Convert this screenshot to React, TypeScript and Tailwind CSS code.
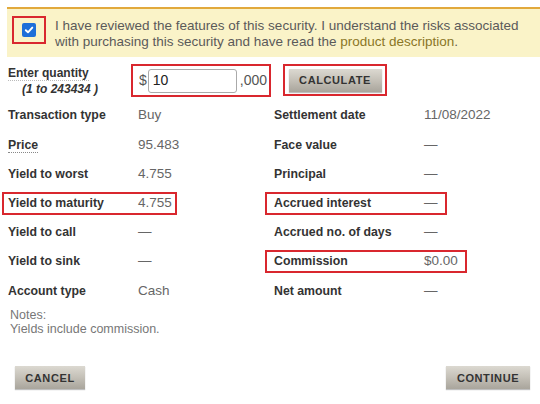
import React from "react";

const F = { fontFamily: '"Liberation Sans", Arial, sans-serif' };

type Cell = { label: string; value: string; box?: boolean; boxW?: number; dotted?: boolean };

const left: Cell[] = [
  { label: "Transaction type", value: "Buy" },
  { label: "Price", value: "95.483", dotted: true },
  { label: "Yield to worst", value: "4.755" },
  { label: "Yield to maturity", value: "4.755", box: true },
  { label: "Yield to call", value: "—" },
  { label: "Yield to sink", value: "—" },
  { label: "Account type", value: "Cash" },
];

const right: Cell[] = [
  { label: "Settlement date", value: "11/08/2022" },
  { label: "Face value", value: "—" },
  { label: "Principal", value: "—" },
  { label: "Accrued interest", value: "—", box: true, boxW: 182 },
  { label: "Accrued no. of days", value: "—" },
  { label: "Commission", value: "$0.00", box: true, boxW: 202 },
  { label: "Net amount", value: "—" },
];

function Btn({ children, className = "" }: { children: React.ReactNode; className?: string }) {
  return (
    <div
      className={
        "flex items-center justify-center h-[23px] bg-gradient-to-b from-[#dcd9d1] via-[#c4c0b7] to-[#a9a59c] text-[11px] font-bold tracking-[0.6px] text-[#333] shadow-[0_1px_1px_rgba(0,0,0,0.25)] " +
        className
      }
    >
      {children}
    </div>
  );
}

export default function App() {
  return (
    <div style={F} className="w-[540px] h-[404px] bg-white relative overflow-hidden">
      <div className="h-[7px]" />
      {/* Banner */}
      <div className="ml-[7px] border-t-2 border-[#e2a93c] bg-[#faf3c8] h-[50px] flex items-start">
        <div className="ml-[5px] mt-[7px] w-[34px] h-[28px] border-2 border-[#d9272e] flex items-center justify-center shrink-0">
          <div className="w-[14px] h-[14px] rounded-[2px] bg-[#1e6fd9] flex items-center justify-center">
            <svg width="10" height="10" viewBox="0 0 10 10">
              <path d="M1.8 5.2 L4 7.3 L8.3 2.6" stroke="white" strokeWidth="1.9" fill="none" strokeLinecap="round" strokeLinejoin="round" />
            </svg>
          </div>
        </div>
        <div className="ml-[9px] mt-[9px] text-[13.5px] leading-[16px] text-[#5a5a5a] whitespace-nowrap">
          I have reviewed the features of this security. I understand the risks associated
          <br />
          with purchasing this security and have read the{" "}
          <span className="text-[#8a7626]">product description</span>.
        </div>
      </div>

      {/* Quantity row */}
      <div className="flex items-start mt-[7px]">
        <div className="w-[131px] pl-[8px] pt-[2px] shrink-0">
          <div className="text-[12px] font-bold text-[#333] leading-[14px]">
            <span className="border-b border-dotted border-[#bbb]">Enter quantity</span>
          </div>
          <div className="text-[12px] font-bold italic text-[#333] leading-[14px] pl-[14px] mt-[2px]">(1 to 243434 )</div>
        </div>
        <div className="w-[140px] h-[33px] border-2 border-[#d9272e] flex items-center pl-[6px] shrink-0">
          <span className="text-[14px] text-[#555]">$</span>
          <div className="ml-[1px] w-[89px] h-[24px] border border-[#aaa] rounded-[3px] flex items-center pl-[4px] text-[14px] text-[#222] shrink-0">
            10
          </div>
          <span className="ml-[3px] text-[14px] text-[#555]">,000</span>
        </div>
        <div className="ml-[12px] w-[104px] h-[32px] border-2 border-[#d9272e] flex items-center justify-center shrink-0">
          <Btn className="w-[93px]">CALCULATE</Btn>
        </div>
      </div>

      {/* Details grid */}
      <div className="mt-[4px] flex flex-col">
        {left.map((l, i) => {
          const r = right[i];
          return (
            <div key={i} className="flex items-center h-[29.2px]">
              <div className="w-[265px] flex items-center shrink-0">
                <div
                  className={
                    "ml-[2px] w-[175px] h-[23px] border-2 flex items-center pl-[4px] shrink-0 " +
                    (l.box ? "border-[#d9272e]" : "border-transparent")
                  }
                >
                  <div className="w-[130px] shrink-0 text-[12.3px] font-bold text-[#333]">
                    {l.dotted ? <span className="border-b border-dotted border-[#888]">{l.label}</span> : l.label}
                  </div>
                  <div className="text-[13.5px] text-[#666] whitespace-nowrap">{l.value}</div>
                </div>
              </div>
              <div
                className={
                  "h-[23px] border-2 flex items-center pl-[7px] shrink-0 " +
                  (r.box ? "border-[#d9272e]" : "border-transparent")
                }
                style={{ width: r.boxW ?? 202 }}
              >
                <div className="w-[150px] shrink-0 text-[12.3px] font-bold text-[#333]">{r.label}</div>
                <div className="text-[13.5px] text-[#666] whitespace-nowrap">{r.value}</div>
              </div>
            </div>
          );
        })}
      </div>

      {/* Notes */}
      <div className="ml-[10px] mt-[3px] text-[12.5px] leading-[14px] text-[#777]">
        <div>Notes:</div>
        <div>Yields include commission.</div>
      </div>

      {/* Footer buttons */}
      <div className="mt-[30px] flex justify-between pl-[15px] pr-[10px]">
        <Btn className="w-[70px]">CANCEL</Btn>
        <Btn className="w-[84px]">CONTINUE</Btn>
      </div>
    </div>
  );
}
